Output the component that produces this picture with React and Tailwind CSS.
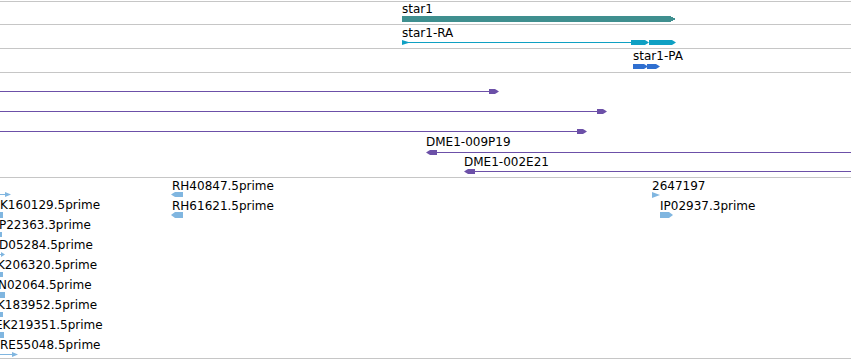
import React from 'react'

// feature colours
const TEAL = '#3f8f8f'
const CYAN = '#0fa0c3'
const BLUE = '#2f6fd0'
const PURPLE = '#6c50a8'
const EST = '#80b6e0'

// labels sit on the track canvas at their feature's coordinate
function Label({ x, y, children }) {
    return (
        <div
            className="absolute whitespace-nowrap text-[12px] leading-[14px] text-black"
            style={{ left: x, top: y }}
        >
            {children}
        </div>
    )
}

// right pointing block with a small arrow tip
function rArrow(x0, x1, y, h, tip = 4) {
    const t = y + h / 2
    return `${x0},${y} ${x1 - tip},${y} ${x1},${t} ${x1 - tip},${y + h} ${x0},${y + h}`
}
function lArrow(x0, x1, y, h, tip = 4) {
    const t = y + h / 2
    return `${x1},${y} ${x0 + tip},${y} ${x0},${t} ${x0 + tip},${y + h} ${x1},${y + h}`
}

function Track({ h, children }) {
    return (
        <div className={`relative shrink-0 overflow-hidden border-b border-[#c6c6c6] ${h}`}>
            {children}
        </div>
    )
}

const leftLabels = [
    { t: 'K160129.5prime', c: 'ml-0' },
    { t: 'P22363.3prime', c: '-ml-px' },
    { t: 'D05284.5prime', c: '-ml-px' },
    { t: 'K206320.5prime', c: '-ml-[3px]' },
    { t: 'N02064.5prime', c: '-ml-[2px]' },
    { t: 'K183952.5prime', c: '-ml-[3px]' },
    { t: 'EK219351.5prime', c: '-ml-[5px]' },
    { t: 'RE55048.5prime', c: 'ml-0' },
]

export default function App() {
    return (
        <div className="flex w-[851px] h-[360px] flex-col overflow-hidden bg-white pt-px font-['DejaVu_Sans',sans-serif]">
            <div className="shrink-0 border-t border-[#c6c6c6]" />

            {/* gene */}
            <Track h="h-[23px]">
                <Label x={402} y={0}>star1</Label>
                <svg className="absolute left-0 top-0" width="851" height="22" shapeRendering="crispEdges">
                    <polygon points={rArrow(402, 676, 14, 6, 6)} fill={TEAL} />
                </svg>
            </Track>

            {/* transcript */}
            <Track h="h-[24px]">
                <Label x={402} y={1}>star1-RA</Label>
                <svg className="absolute left-0 top-0" width="851" height="23">
                    <rect x="402" y="17" width="230" height="1" fill={CYAN} shapeRendering="crispEdges" />
                    <polygon points="402,15 402,20 410,17.5" fill={CYAN} />
                    <polygon points={rArrow(631, 649, 15, 5)} fill={CYAN} />
                    <polygon points={rArrow(649, 676, 15, 5)} fill={CYAN} />
                </svg>
            </Track>

            {/* protein */}
            <Track h="h-[24px]">
                <Label x={633} y={0}>star1-PA</Label>
                <svg className="absolute left-0 top-0" width="851" height="23">
                    <polygon points={rArrow(633, 648, 15, 5)} fill={BLUE} />
                    <polygon points={rArrow(647, 660, 15, 5)} fill={BLUE} />
                </svg>
            </Track>

            {/* BAC clones */}
            <Track h="h-[105px]">
                <Label x={426} y={62}>DME1-009P19</Label>
                <Label x={464} y={82}>DME1-002E21</Label>
                <svg className="absolute left-0 top-0" width="851" height="104">
                    <g shapeRendering="crispEdges" fill={PURPLE}>
                        <rect x="0" y="18" width="492" height="1" />
                        <rect x="0" y="38" width="600" height="1" />
                        <rect x="0" y="58" width="580" height="1" />
                        <rect x="432" y="79" width="419" height="1" />
                        <rect x="470" y="98" width="381" height="1" />
                    </g>
                    <g fill={PURPLE}>
                        <polygon points={rArrow(489, 499, 16, 5)} />
                        <polygon points={rArrow(597, 607, 36, 5)} />
                        <polygon points={rArrow(577, 587, 56, 5)} />
                        <polygon points={lArrow(426, 437, 77, 5)} />
                        <polygon points={lArrow(464, 475, 96, 5)} />
                    </g>
                </svg>
            </Track>

            {/* ESTs */}
            <Track h="h-[181px]">
                <svg className="absolute left-0 top-0" width="851" height="180">
                    <g fill={EST}>
                        <rect x="0" y="16" width="6" height="1" />
                        <polygon points="5,14 11,16.5 5,19" />
                        <rect x="0" y="34" width="3" height="6" />
                        <rect x="0" y="54" width="2" height="5" />
                        <rect x="0" y="76" width="2" height="1" />
                        <polygon points="1,74 5,76.5 1,79" />
                        <rect x="0" y="94" width="3" height="5" />
                        <rect x="0" y="114" width="5" height="6" />
                        <rect x="0" y="134" width="3" height="5" />
                        <rect x="0" y="154" width="4" height="6" />
                        <rect x="0" y="176" width="13" height="1" />
                        <polygon points="12,174 18,176.5 12,179" />

                        <polygon points={lArrow(171, 183, 14, 5)} />
                        <polygon points={lArrow(171, 183, 34, 6)} />
                        <polygon points="652,14 660,17 652,20" />
                        <polygon points={rArrow(660, 673, 34, 6)} />
                    </g>
                </svg>

                <div className="relative flex flex-col pt-[20px] text-[12px] leading-[14px] text-black">
                    {leftLabels.map((l) => (
                        <div key={l.t} className={`h-[20px] whitespace-nowrap ${l.c}`}>{l.t}</div>
                    ))}
                </div>

                <Label x={172} y={1}>RH40847.5prime</Label>
                <Label x={172} y={21}>RH61621.5prime</Label>
                <Label x={652} y={1}>2647197</Label>
                <Label x={660} y={21}>IP02937.3prime</Label>
            </Track>
        </div>
    )
}
